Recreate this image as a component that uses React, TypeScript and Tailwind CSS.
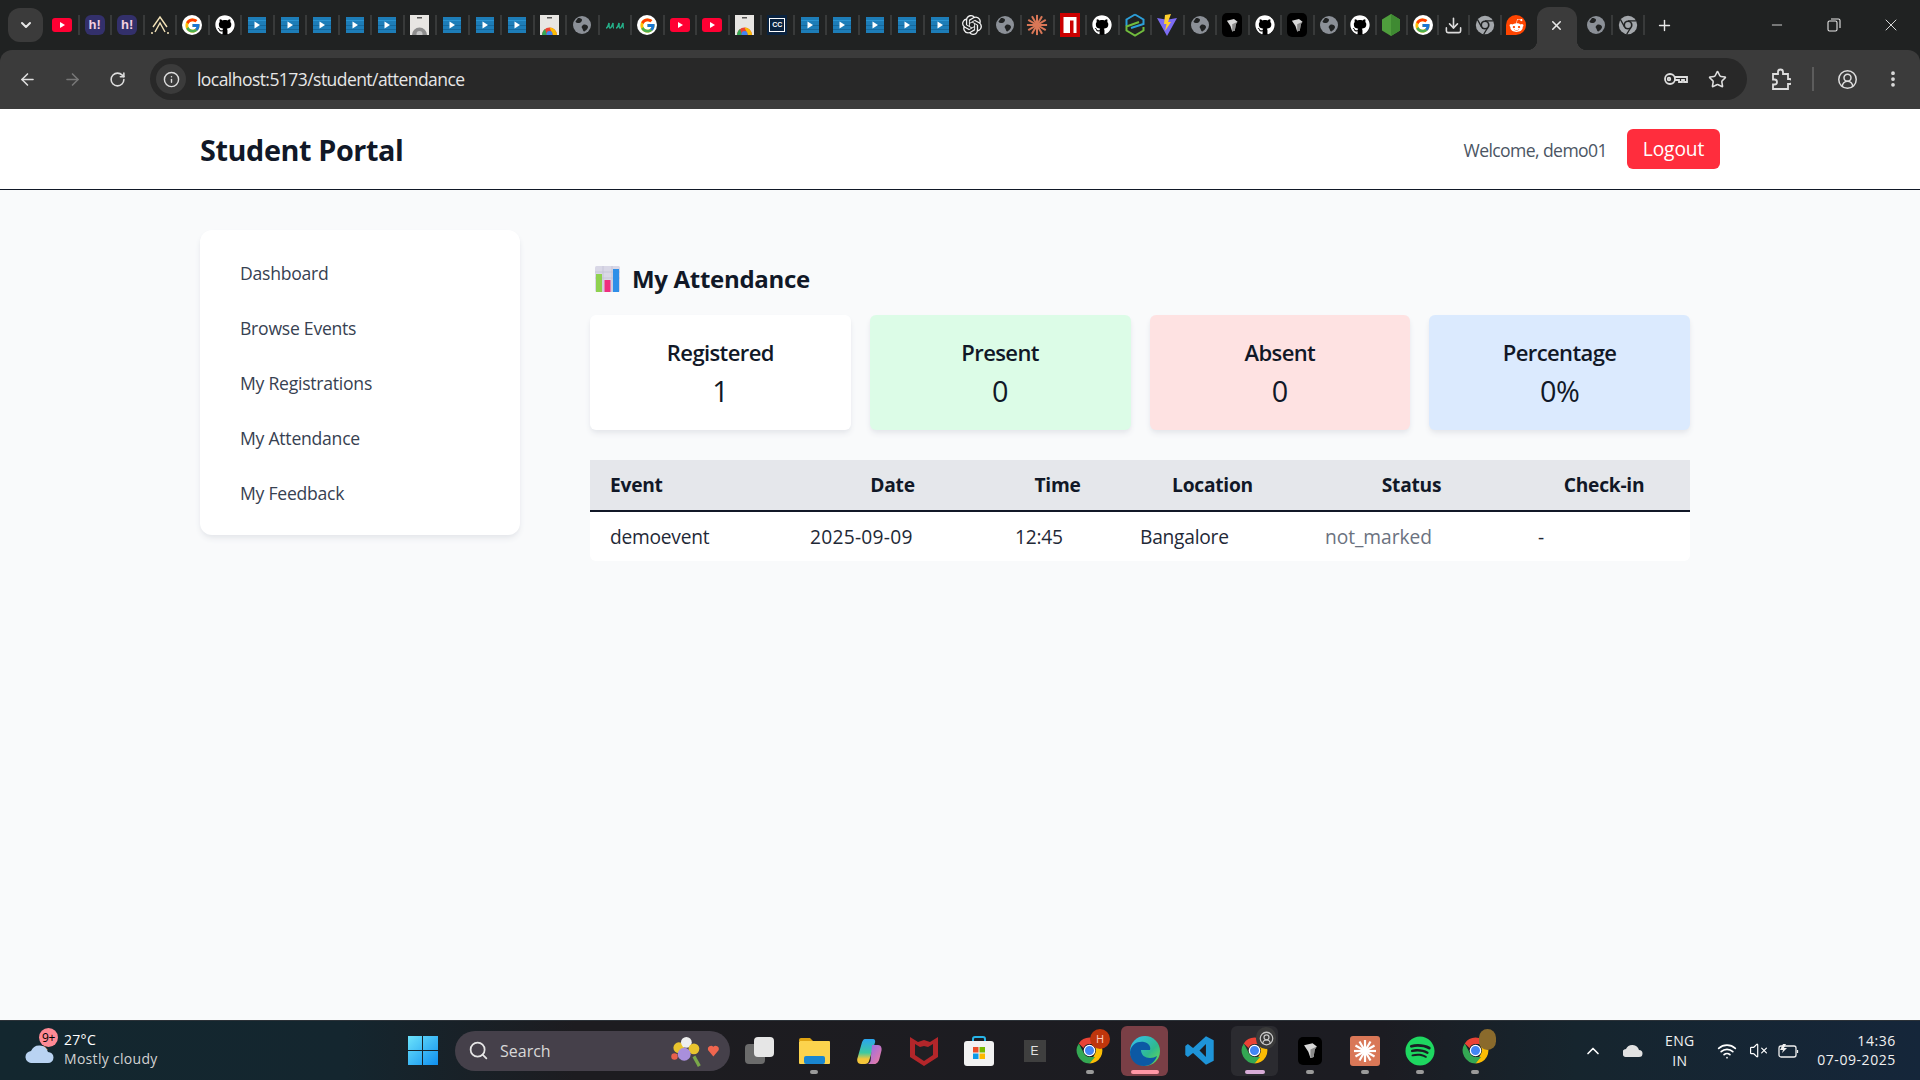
import type { ReactNode } from 'react'
import {
  ArrowLeft,
  ArrowRight,
  ChevronDown,
  ChevronUp,
  CircleUserRound,
  Download,
  EllipsisVertical,
  Info,
  Minus,
  Plus,
  RotateCw,
  Search,
  Star,
  VolumeX,
  Wifi,
  X,
} from 'lucide-react'
import { FaGithub, FaRedditAlien, FaSpotify } from 'react-icons/fa'
import { FcGoogle } from 'react-icons/fc'
import { SiOpenai } from 'react-icons/si'

const sans = 'font-["Open_Sans",sans-serif]'

function ChromeLogo({ size = 20, mono = false }: { size?: number; mono?: boolean }) {
  if (mono) {
    return (
      <svg width={size} height={size} viewBox="0 0 24 24">
        <circle cx="12" cy="12" r="11" fill="#a3a7ab" />
        <path d="M12 7h10M8 14.500L3 5.500M15.500 15L10.500 23" stroke="#202222" strokeWidth="1.500" />
        <circle cx="12" cy="12" r="5.500" fill="#202222" />
        <circle cx="12" cy="12" r="3.500" fill="#a3a7ab" />
      </svg>
    )
  }
  return (
    <svg width={size} height={size} viewBox="0 0 24 24">
      <path d="M12 2a10 10 0 0 1 8.660 5H12a5 5 0 0 0-4.600 3L3.700 6.500A10 10 0 0 1 12 2z" fill="#ea4335" />
      <path d="M20.660 7A10 10 0 0 1 12 22l4.300-7.500a5 5 0 0 0 0-5A5 5 0 0 0 15 7z" fill="#fbbc04" />
      <path d="M12 22A10 10 0 0 1 3.700 6.500l4.100 7.800A5 5 0 0 0 12 17h4.300z" fill="#34a853" />
      <circle cx="12" cy="12" r="4" fill="#4285f4" stroke="#fff" strokeWidth="1" />
    </svg>
  )
}

function BlueTile() {
  return (
    <svg width="18" height="16" viewBox="0 0 18 16">
      <rect width="18" height="16" fill="#1d7db8" />
      <rect y="3" width="18" height="1" fill="#2a93d0" />
      <rect y="8" width="18" height="1" fill="#15699e" />
      <rect y="12" width="18" height="1" fill="#15699e" />
      <path d="M6.500 4.500l5.500 3.500-5.500 3.500z" fill="#fff" />
    </svg>
  )
}

function Youtube() {
  return (
    <svg width="20" height="14" viewBox="0 0 20 14">
      <rect width="20" height="14" rx="3" fill="#ff0033" />
      <path d="M8 4l5 3-5 3z" fill="#fff" />
    </svg>
  )
}

function HackerBadge() {
  return (
    <span className='flex h-5 w-5 items-center justify-center rounded-md bg-[#33306b] font-["Liberation_Sans",sans-serif] text-[13px] font-bold text-[#f5d0e0]'>
      h!
    </span>
  )
}

function Globe() {
  return (
    <svg width="18" height="18" viewBox="0 0 18 18">
      <circle cx="9" cy="9" r="9" fill="#8b9097" />
      <path d="M5 2c2 0 4 .5 4 2S7.500 7 6 7 2.500 6.500 2.500 5.500zM10 9c2-1 5 0 5 2s-3 4.500-4 4.500-1-2.500-2-3.500 0-2 1-3z" fill="#202222" />
    </svg>
  )
}

function StorePage({ colored }: { colored: boolean }) {
  return (
    <svg width="19" height="20" viewBox="0 0 19 20">
      <rect width="19" height="20" fill="#e8e6e3" />
      <rect x="7" y="2" width="5" height="1.500" fill="#555" />
      {colored ? (
        <>
          <path d="M2 20a7.500 7.500 0 0 1 15 0z" fill="#ea4335" />
          <path d="M9.500 12.500a7.500 7.500 0 0 1 7.500 7.500h-4z" fill="#fbbc04" />
          <path d="M2 20a7.500 7.500 0 0 1 3-6l2 6z" fill="#34a853" />
          <circle cx="9.500" cy="19" r="3" fill="#4285f4" />
        </>
      ) : (
        <>
          <path d="M2 20a7.500 7.500 0 0 1 15 0z" fill="#8d8d8d" />
          <circle cx="9.500" cy="19" r="3" fill="#c5c5c5" />
        </>
      )}
    </svg>
  )
}

function Cube({ size = 20 }: { size?: number }) {
  return (
    <span className="flex items-center justify-center rounded-[5px] bg-black" style={{ width: size, height: size + 4 }}>
      <svg width={size * 0.62} height={size * 0.72} viewBox="0 0 14 16">
        <path d="M1 3l8-2 4 3-2 3-1 7-3 1-2-6z" fill="#d8d8d8" />
        <path d="M7 15V7l6-3-2 3-1 7z" fill="#8a8a8a" />
      </svg>
    </span>
  )
}

function ClaudeBurst({ size = 22, color = '#d97757' }: { size?: number; color?: string }) {
  const rays = [0, 30, 60, 90, 120, 150, 180, 210, 240, 270, 300, 330]
  return (
    <svg width={size} height={size} viewBox="0 0 24 24">
      {rays.map((r) => (
        <line key={r} x1="12" y1="12" x2="12" y2="1" stroke={color} strokeWidth="2.200" transform={`rotate(${r} 12 12)`} />
      ))}
    </svg>
  )
}

const tabIcons: Record<string, () => ReactNode> = {
  yt: () => <Youtube />,
  h: () => <HackerBadge />,
  w: () => (
    <svg width="20" height="20" viewBox="0 0 20 20" fill="none" stroke="#f3e3b8" strokeWidth="1.400">
      <path d="M3 12L10 2l7 10M5 17l5-9 5 9M1 18h2M17 18h2" />
    </svg>
  ),
  g: () => (
    <span className="flex h-5 w-5 items-center justify-center rounded-full bg-white">
      <FcGoogle size={17} />
    </span>
  ),
  gh: () => (
    <span className="flex h-5 w-5 items-center justify-center rounded-full bg-black text-white">
      <FaGithub size={20} />
    </span>
  ),
  tile: () => <BlueTile />,
  page: () => <StorePage colored={false} />,
  store: () => <StorePage colored />,
  globe: () => <Globe />,
  u: () => (
    <svg width="20" height="10" viewBox="0 0 20 10" fill="none" stroke="#25b089" strokeWidth="1.500">
      <path d="M1 8c1 0 2-1 3-5 0 3 0 5 1 5s2-2 3-5c0 3 0 5 1 5M11 8c1 0 2-1 3-5 0 3 0 5 1 5s2-2 3-5c0 3 0 5 1 5" />
    </svg>
  ),
  cc: () => (
    <span className="flex h-5 w-5 items-center justify-center bg-[#0a2340]">
      <span className='flex h-3.5 w-4 items-center justify-center border border-white font-["Liberation_Sans",sans-serif] text-[7px] font-bold text-white'>
        CC
      </span>
    </span>
  ),
  ai: () => <SiOpenai size={20} color="#f2f2f2" />,
  claude: () => <ClaudeBurst />,
  npm: () => (
    <svg width="20" height="24" viewBox="0 0 20 24">
      <rect width="20" height="24" fill="#cb0000" />
      <path d="M3.500 4h13v16h-3V7.500h-3.500V20H3.500z" fill="#fff" />
    </svg>
  ),
  s: () => (
    <svg width="20" height="24" viewBox="0 0 20 24" fill="none" strokeWidth="2">
      <path d="M10 1.500l8.500 5v4.500L6 15" stroke="#2c9fd9" />
      <path d="M1.500 13V6.500L10 1.500" stroke="#2c9fd9" />
      <path d="M14 9L1.500 13.500v4l8.500 5 8.500-5V14" stroke="#71bc3d" />
    </svg>
  ),
  vite: () => (
    <svg width="20" height="22" viewBox="0 0 20 22">
      <path d="M0 4l10 1.800L20 4 10 22z" fill="#7c6cf5" />
      <path d="M8 1l6-1-3 8h3L8 17l1.500-7H7z" fill="#ffcf2e" />
    </svg>
  ),
  cube: () => <Cube />,
  node: () => (
    <svg width="18" height="22" viewBox="0 0 18 22">
      <path d="M9 0l9 5.500v11L9 22l-9-5.500v-11z" fill="#4f9e3d" />
      <path d="M9 0l9 5.500v11L9 22z" fill="#3f8a32" />
    </svg>
  ),
  dl: () => <Download size={19} color="#dcdcdc" />,
  chromeGrey: () => <ChromeLogo mono />,
  reddit: () => (
    <span className="flex h-5 w-5 items-center justify-center rounded-full rounded-bl-[3px] bg-[#ff4500] text-white">
      <FaRedditAlien size={15} />
    </span>
  ),
}

const tabs = [
  'yt', 'h', 'h', 'w', 'g', 'gh', 'tile', 'tile', 'tile', 'tile', 'tile', 'page', 'tile', 'tile', 'tile', 'store',
  'globe', 'u', 'g', 'yt', 'yt', 'store', 'cc', 'tile', 'tile', 'tile', 'tile', 'tile', 'ai', 'globe', 'claude', 'npm',
  'gh', 's', 'vite', 'globe', 'cube', 'gh', 'cube', 'globe', 'gh', 'node', 'g', 'dl', 'chromeGrey', 'reddit',
]

function TabStrip() {
  return (
    <div className="flex h-[50px] items-center bg-[#202222] pl-2">
      <div className="flex h-[34px] w-[35px] items-center justify-center rounded-xl bg-[#3b3b3b]">
        <ChevronDown size={16} color="#e8e8e8" strokeWidth={3} />
      </div>
      <div className="ml-[3px] flex">
        {tabs.map((t, i) => (
          <div
            key={i}
            className={`relative flex h-[20px] items-center justify-center ${i < 39 ? 'w-[32.500px]' : 'w-[31.200px]'}`}
          >
            {tabIcons[t]()}
            {i > 0 && <span className="absolute -left-px top-0 h-5 w-[2px] bg-[#383a3a]" />}
          </div>
        ))}
      </div>
      <div className="relative ml-[5px] flex h-[43px] w-10 items-center justify-center self-end rounded-t-[12px] bg-[#3b3b3b] pb-[7px]">
        <X size={15} color="#e8e8e8" strokeWidth={2.500} />
        <span className="absolute bottom-0 left-[-10px] h-2.5 w-2.5 bg-[radial-gradient(circle_at_0_0,transparent_10px,#3b3b3b_10.500px)]" />
        <span className="absolute bottom-0 right-[-10px] h-2.5 w-2.5 bg-[radial-gradient(circle_at_100%_0,transparent_10px,#3b3b3b_10.500px)]" />
      </div>
      <div className="ml-[3px] flex h-5 w-8 items-center justify-center">
        <Globe />
      </div>
      <div className="relative flex h-5 w-8 items-center justify-center">
        <ChromeLogo mono />
        <span className="absolute -left-px top-0 h-5 w-[2px] bg-[#383a3a]" />
        <span className="absolute -right-px top-0 h-5 w-[2px] bg-[#383a3a]" />
      </div>
      <div className="ml-[5px] flex w-8 items-center justify-center">
        <Plus size={17} color="#e8e8e8" strokeWidth={2} />
      </div>
      <div className="ml-auto flex items-center text-[#e8e8e8]">
        <span className="flex w-14 justify-center">
          <Minus size={16} strokeWidth={1.300} />
        </span>
        <span className="ml-[1px] flex w-14 justify-center">
          <svg width="14" height="14" viewBox="0 0 14 14" fill="none" stroke="#e8e8e8" strokeWidth="1.100">
            <rect x="1" y="3" width="9" height="10" rx="1.500" />
            <path d="M4 1h7.500A1.500 1.500 0 0 1 13 2.500V10" />
          </svg>
        </span>
        <span className="flex w-[58px] justify-center">
          <X size={20} strokeWidth={1.100} />
        </span>
      </div>
    </div>
  )
}

function Toolbar() {
  return (
    <div className="bg-[#202222]">
      <div className="flex h-[59px] items-center rounded-tl-xl rounded-tr-xl bg-[#3b3b3b] pb-[1px] text-[#dedede]">
        <ArrowLeft size={19} className="ml-[18px]" strokeWidth={2} />
        <ArrowRight size={19} className="ml-[26px] text-[#777]" strokeWidth={2} />
        <RotateCw size={17} className="ml-[27px]" strokeWidth={2.200} />
        <div className="ml-[24px] flex h-[42px] w-[1597px] items-center rounded-full bg-[#282828] pl-[6px]">
          <span className="flex h-[30px] w-[30px] items-center justify-center rounded-full bg-[#3b3b3b]">
            <Info size={17} strokeWidth={2} />
          </span>
          <span className={`${sans} ml-[11px] text-[17.500px] tracking-[-0.55px] text-[#e6e6e6]`}>
            localhost:5173/student/attendance
          </span>
          <div className="ml-auto flex items-center pr-[20px]">
            <svg width="24" height="14" viewBox="0 0 24 14" fill="none" stroke="#dedede" strokeWidth="1.800">
              <circle cx="6" cy="7" r="5" />
              <circle cx="5" cy="7" r="1.300" />
              <path d="M11 5h12v5h-3V8h-2v2h-3V8h-4" />
            </svg>
            <Star size={19} className="ml-[20px]" strokeWidth={2} />
          </div>
        </div>
        <svg className="ml-[24px]" width="20" height="22" viewBox="0 0 20 22" fill="none" stroke="#dedede" strokeWidth="1.800">
          <path d="M2 6h5V4a2.500 2.500 0 0 1 5 0v2h5v5h1.500a2.500 2.500 0 0 1 0 5H17v5H2v-4.500h1.500a2.500 2.500 0 0 0 0-5H2z" />
        </svg>
        <span className="ml-[21px] h-[24px] w-[2px] bg-[#5c5c5c]" />
        <CircleUserRound size={21} className="ml-[23px]" strokeWidth={1.700} />
        <EllipsisVertical size={20} className="ml-[25px]" strokeWidth={2.500} />
      </div>
    </div>
  )
}

const navItems = ['Dashboard', 'Browse Events', 'My Registrations', 'My Attendance', 'My Feedback']

const stats = [
  { label: 'Registered', value: '1', bg: 'bg-white' },
  { label: 'Present', value: '0', bg: 'bg-[#dcfce7]' },
  { label: 'Absent', value: '0', bg: 'bg-[#fee2e2]' },
  { label: 'Percentage', value: '0%', bg: 'bg-[#dbeafe]' },
]

function ChartEmoji() {
  return (
    <svg width="25" height="26" viewBox="0 0 25 26">
      <rect width="25" height="26" rx="1.500" fill="#d9d7e6" />
      <path d="M0 6h25M0 12h25M8 0v26M17 0v26" stroke="#c3c1d4" strokeWidth="0.800" />
      <rect x="1" y="8" width="6" height="18" fill="#8fd14f" />
      <rect x="9.500" y="14" width="6" height="12" fill="#ef2f7e" />
      <rect x="18" y="3" width="6" height="23" fill="#2f8fe8" />
    </svg>
  )
}

function Portal() {
  return (
    <div className={`${sans} flex min-h-0 flex-1 flex-col bg-[#f9fafb]`}>
      <header className="flex h-[81px] items-center justify-between border-b border-[#111827] bg-white px-[200px]">
        <h1 className="pt-[1px] text-[28.800px] font-bold tracking-[-0.4px] text-[#111827]">Student Portal</h1>
        <div className="flex items-center">
          <span className="pt-[2px] text-[17.600px] tracking-[-0.6px] text-[#4b5563]">Welcome, demo01</span>
          <button className="ml-[20px] h-10 w-[93px] rounded-md bg-[#ff2d3d] text-[19.200px] tracking-[-0.1px] text-white">
            Logout
          </button>
        </div>
      </header>
      <div className="flex pl-[200px] pr-[230px] pt-10">
        <aside className="h-[305px] w-[320px] rounded-xl bg-white pb-[14px] pl-10 pt-4 shadow-md shadow-gray-200">
          {navItems.map((item) => (
            <div key={item} className="flex h-[55px] items-center text-[17.600px] tracking-[-0.25px] text-[#374151]">
              {item}
            </div>
          ))}
        </aside>
        <main className="ml-[70px] flex-1 pt-[32px]">
          <h2 className="flex h-[34px] items-center pl-[5px] text-[24px] font-bold tracking-[-0.3px] text-[#111827]">
            <ChartEmoji />
            <span className="ml-3">My Attendance</span>
          </h2>
          <div className="mt-[19px] grid grid-cols-4 gap-[19px]">
            {stats.map((s) => (
              <div key={s.label} className={`${s.bg} flex h-[115px] flex-col items-center rounded-md pt-[21px] text-[#111827] shadow-md shadow-gray-200`}>
                <div className="text-[22px] font-semibold leading-8 tracking-[-0.6px]">{s.label}</div>
                <div className="mt-[7px] text-[28.800px] leading-8 tracking-[-0.4px]">{s.value}</div>
              </div>
            ))}
          </div>
          <table className="mt-[30px] w-[1100px] table-fixed overflow-hidden rounded-b-md bg-white text-[19.200px] tracking-[-0.25px] text-[#1f2937]">
            <thead>
              <tr className="h-[51px] border-b-2 border-[#111827] bg-[#e5e7eb] text-[#111827]">
                <th className="w-[200px] pl-5 pt-[1px] text-left font-bold">Event</th>
                <th className="w-[205px] pt-[1px] font-bold">Date</th>
                <th className="w-[125px] pt-[1px] font-bold">Time</th>
                <th className="w-[185px] pt-[1px] font-bold">Location</th>
                <th className="w-[213px] pt-[1px] font-bold">Status</th>
                <th className="w-[172px] pt-[1px] font-bold">Check-in</th>
              </tr>
            </thead>
            <tbody>
              <tr className="h-[50px]">
                <td className="pl-5 pt-[1px]">demoevent</td>
                <td className="pl-5 pt-[1px] tracking-[0.25px]">2025-09-09</td>
                <td className="pl-5 pt-[1px]">12:45</td>
                <td className="pl-5 pt-[1px]">Bangalore</td>
                <td className="pl-5 pt-[1px] tracking-[-0.05px] text-[#6b7280]">not_marked</td>
                <td className="pl-5 pt-[1px]">-</td>
              </tr>
            </tbody>
          </table>
        </main>
      </div>
    </div>
  )
}

function TaskChrome({ badge }: { badge?: ReactNode }) {
  return (
    <span className="relative">
      <ChromeLogo size={31} />
      {badge}
    </span>
  )
}

const taskItems: { icon: ReactNode; dot?: string; active?: string }[] = [
  {
    icon: (
      <svg width="31" height="27" viewBox="0 0 31 27">
        <path d="M0 3a2 2 0 0 1 2-2h9l3 3h-14z" fill="#e0a412" />
        <rect y="4" width="31" height="23" rx="1" fill="#fcd34d" />
        <rect x="5" y="19" width="21" height="8" rx="2" fill="#1a86d0" />
      </svg>
    ),
    dot: 'bg-[#9a9a9a] w-2',
  },
  {
    icon: (
      <svg width="30" height="30" viewBox="0 0 30 30">
        <defs>
          <linearGradient id="cop" x1="0" y1="0" x2="0" y2="1">
            <stop offset="0" stopColor="#2aa5f0" />
            <stop offset="0.550" stopColor="#3ec9a0" />
            <stop offset="0.800" stopColor="#f5c53a" />
          </linearGradient>
          <linearGradient id="cop2" x1="0" y1="0" x2="1" y2="1">
            <stop offset="0" stopColor="#8a6cf0" />
            <stop offset="1" stopColor="#f47c9c" />
          </linearGradient>
        </defs>
        <path d="M11 3h8c2 0 2.500 2 2 3.500L15 25c-.5 2-2 3-4 3H7c-3 0-4.500-3-3.500-6L7.500 8c.7-3 2-5 3.500-5z" fill="url(#cop)" />
        <path d="M18 9h6c3 0 4 3 3.500 5.500l-2 8c-.7 3-2.500 5.500-5 5.500H13c2 0 3-1.500 3.500-3z" fill="url(#cop2)" />
      </svg>
    ),
  },
  {
    icon: (
      <svg width="28" height="31" viewBox="0 0 28 31">
        <path d="M0 2l8 5 6-2 6 2 8-5v20l-14 9-14-9z" fill="#b3262a" />
        <path d="M5 9l5 3 4-1 4 1 5-3v11l-9 6-9-6z" fill="#202024" />
      </svg>
    ),
  },
  {
    icon: (
      <svg width="30" height="30" viewBox="0 0 30 30">
        <path d="M9 7V3a2 2 0 0 1 2-2h8a2 2 0 0 1 2 2v4" fill="none" stroke="#27b4e8" strokeWidth="2" />
        <rect y="5" width="30" height="25" rx="3" fill="#f2f2f2" />
        <rect x="9" y="11" width="5.500" height="5.500" fill="#ea4e28" />
        <rect x="15.500" y="11" width="5.500" height="5.500" fill="#76b900" />
        <rect x="9" y="17.500" width="5.500" height="5.500" fill="#0a9ae8" />
        <rect x="15.500" y="17.500" width="5.500" height="5.500" fill="#fcb900" />
      </svg>
    ),
  },
  {
    icon: (
      <span className='flex h-[22px] w-[22px] items-center justify-center bg-[#3f3f3f] font-["Liberation_Sans",sans-serif] text-[12px] text-[#e2e2e2]'>
        E
      </span>
    ),
  },
  {
    icon: (
      <TaskChrome
        badge={
          <span className="absolute -right-[5px] -top-[6px] flex h-5 w-5 items-center justify-center rounded-full bg-[#bf360c] text-[11px] text-[#ffccbc]">
            H
          </span>
        }
      />
    ),
    dot: 'bg-[#9a9a9a] w-2',
  },
  {
    icon: (
      <svg width="32" height="32" viewBox="0 0 32 32">
        <defs>
          <linearGradient id="edge" x1="0" y1="0" x2="1" y2="1">
            <stop offset="0" stopColor="#35c1f1" />
            <stop offset="0.600" stopColor="#2fb98f" />
            <stop offset="1" stopColor="#6fe04c" />
          </linearGradient>
        </defs>
        <circle cx="16" cy="16" r="15" fill="url(#edge)" />
        <path d="M1 17C2 9 9 6 15 7c5 1 7 5 6 8H12c0 5 4 8 9 8 3 0 5-1 7-2-2 6-7 10-13 10C7 31 1 25 1 17z" fill="#0c59a4" />
      </svg>
    ),
    active: 'bg-[#7a3f46]',
    dot: 'bg-[#ff98a6] w-[28px]',
  },
  {
    icon: (
      <svg width="31" height="31" viewBox="0 0 24 24">
        <path d="M17 1l6 3v16l-6 3L7 14l-4 3-2-1.500v-7L3 7l4 3z" fill="#1e94d8" />
        <path d="M17 7l-5 5 5 5z" fill="#1c1c22" />
      </svg>
    ),
  },
  {
    icon: (
      <TaskChrome
        badge={
          <span className="absolute -right-[6px] -top-[8px] flex h-[22px] w-[20px] items-center justify-center rounded-full bg-[#3a3a3a] text-[#c8c8c8]">
            <CircleUserRound size={15} />
          </span>
        }
      />
    ),
    active: 'bg-[#2b2b30]',
    dot: 'bg-[#d8acd8] w-5',
  },
  { icon: <Cube size={24} />, dot: 'bg-[#9a9a9a] w-2' },
  {
    icon: (
      <span className="flex h-[30px] w-[30px] items-center justify-center rounded-[3px] bg-[#d97757]">
        <ClaudeBurst size={24} color="#ffffff" />
      </span>
    ),
    dot: 'bg-[#9a9a9a] w-2',
  },
  { icon: <FaSpotify size={30} color="#1ed760" />, dot: 'bg-[#9a9a9a] w-2' },
  {
    icon: (
      <TaskChrome
        badge={<span className="absolute -right-[5px] -top-[6px] h-[21px] w-[17px] rounded-full bg-[#8a6a2c]" />}
      />
    ),
    dot: 'bg-[#9a9a9a] w-2',
  },
]

function Taskbar() {
  return (
    <footer className={`${sans} flex h-[60px] shrink-0 items-center border-t border-[#2c3238] bg-[linear-gradient(90deg,#13272f_0%,#14262f_18%,#1d1c20_30%,#1c1c22_72%,#16252e_82%,#15263a_100%)] text-white`}>
      <div className="relative flex h-full w-[408px] shrink-0 items-center pl-[64px] text-[14px] leading-[19px] tracking-[0.3px]">
        <svg className="absolute left-[25px] top-[22px]" width="30" height="20" viewBox="0 0 30 20">
          <path d="M14 6l5-3 4 4z" fill="#f08030" />
          <path d="M7 20a6 6 0 0 1-1-12 9 9 0 0 1 17 1 5.500 5.500 0 0 1 0 11z" fill="#b9d3f2" />
        </svg>
        <span className="absolute left-[39px] top-[7px] flex h-[19px] w-[19px] items-center justify-center rounded-full bg-[#ff8a95] text-[12px] tracking-[-0.3px] text-black">
          9+
        </span>
        <div className="-mt-[3px]">
          <div>27°C</div>
          <div className="text-[#d2d2d2]">Mostly cloudy</div>
        </div>
      </div>
      <svg width="30" height="29" viewBox="0 0 30 29" className="shrink-0">
        <defs>
          <linearGradient id="winlogo" x1="0" y1="0" x2="1" y2="1">
            <stop offset="0" stopColor="#6ce3fb" />
            <stop offset="1" stopColor="#0f8fef" />
          </linearGradient>
        </defs>
        <path d="M0 0h14v14H0zM15 0h15v14H15zM0 15h14v14H0zM15 15h15v14H15z" fill="url(#winlogo)" />
      </svg>
      <div className="ml-[17px] flex h-10 w-[275px] shrink-0 items-center rounded-full bg-[#45404a] pl-[13px]">
        <Search size={21} color="#e6e6e6" strokeWidth={2} />
        <span className="ml-[11px] text-[16px] tracking-[0px] text-[#d8d8d8]">Search</span>
        <svg className="ml-auto mr-[8px]" width="54" height="34" viewBox="0 0 50 30">
          <circle cx="10" cy="12" r="5" fill="#e8c32e" />
          <circle cx="17" cy="7" r="5" fill="#eeeeee" />
          <circle cx="24" cy="13" r="5" fill="#e8c32e" />
          <circle cx="15" cy="18" r="6" fill="#a98fdc" />
          <circle cx="6" cy="20" r="3" fill="#e8604c" />
          <path d="M24 20l5 9" stroke="#7aa84a" strokeWidth="3" />
          <path d="M42 20l-5-6a3 3 0 0 1 5-3 3 3 0 0 1 5 3z" fill="#f0664f" />
        </svg>
      </div>
      <div className="flex shrink-0 pl-[1.500px]">
        <div className="flex h-[50px] w-[55.100px] items-center justify-center">
          <span className="relative block h-[27px] w-[29px]">
            <span className="absolute bottom-0 left-0 h-5 w-5 rounded-sm bg-[#6b6b6b]" />
            <span className="absolute right-0 top-0 h-5 w-5 rounded-sm bg-[#e6e6e6]" />
          </span>
        </div>
        {taskItems.map((t, i) => (
          <div key={i} className="relative flex h-[50px] w-[55.100px] items-center justify-center">
            {t.active && <span className={`${t.active} absolute inset-x-[4px] inset-y-0 rounded-md`} />}
            <span className="relative flex items-center justify-center">{t.icon}</span>
            {t.dot && <span className={`${t.dot} absolute bottom-[2px] h-[4px] rounded-full`} />}
          </div>
        ))}
      </div>
      <div className="ml-[80px] flex shrink-0 items-center">
        <ChevronUp size={20} strokeWidth={2} />
        <svg className="ml-[20px]" width="20" height="13" viewBox="0 0 20 13">
          <path d="M4 13a4 4 0 0 1-1-8 7 7 0 0 1 13 1 3.500 3.500 0 0 1 0 7z" fill="#e2e2e2" />
        </svg>
        <div className="ml-[21px] flex w-[32px] flex-col items-center text-[14px] leading-[20px] tracking-[0.3px] text-[#f0f0f0]">
          <span>ENG</span>
          <span>IN</span>
        </div>
        <Wifi size={20} className="ml-[21px]" strokeWidth={2} />
        <VolumeX size={19} className="ml-[12px]" strokeWidth={1.500} />
        <svg className="ml-[10px]" width="21" height="16" viewBox="0 0 21 16" fill="none" stroke="#f0f0f0" strokeWidth="1.300">
          <rect x="1" y="3" width="17" height="11" rx="2" />
          <path d="M19.500 7v3" />
          <path d="M5 1L2 7h3l-1 3 5-5H6l2-4z" fill="#f0f0f0" stroke="none" />
        </svg>
        <div className="-mt-[1px] ml-[15px] flex w-[82px] flex-col items-end whitespace-nowrap text-[14px] leading-[19px] tracking-[0.55px] text-[#f0f0f0]">
          <span>14:36</span>
          <span>07-09-2025</span>
        </div>
      </div>
    </footer>
  )
}

export default function App() {
  return (
    <div className="flex h-screen flex-col overflow-hidden">
      <TabStrip />
      <Toolbar />
      <Portal />
      <Taskbar />
    </div>
  )
}
